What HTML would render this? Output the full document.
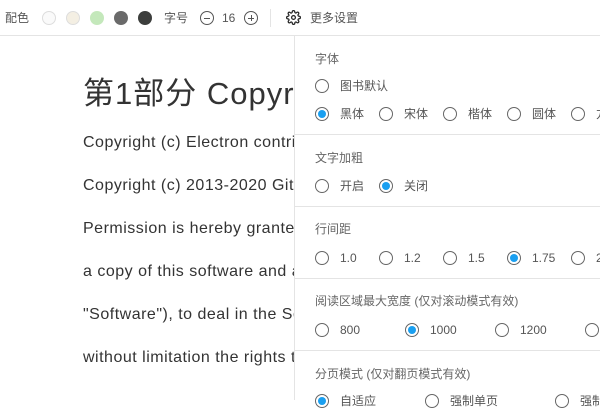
<!DOCTYPE html>
<html><head><meta charset="utf-8"><style>
*{margin:0;padding:0;box-sizing:border-box}
body{width:600px;height:400px;overflow:hidden;background:#fff;font-family:"Liberation Sans","Noto Sans CJK SC",sans-serif;position:relative;color:#555}
.bar{position:absolute;left:0;top:0;width:600px;height:36px;border-bottom:1px solid #e4e4e4;font-size:12px}
.bar span{position:absolute;top:10px;line-height:16px;color:#555}
.dot{position:absolute;top:11px;width:14px;height:14px;border-radius:50%}
.ic{position:absolute;top:11px;width:14px;height:14px;border:1px solid #555;border-radius:50%}
.content{position:absolute;left:83px;top:0;color:#333}
.content h1{position:absolute;top:68px;left:0;font-size:31px;letter-spacing:1px;font-weight:normal;white-space:nowrap;color:#333}
.content p{position:absolute;left:0;font-size:16px;letter-spacing:0.5px;white-space:nowrap;line-height:18px}
.panel{position:absolute;left:294px;top:36px;width:306px;height:364px;background:#fff;border-left:1px solid #e4e4e4;font-size:12px}
.lab{position:absolute;left:20px;color:#666}
.hr{position:absolute;left:0;width:306px;border-top:1px solid #e4e4e4}
.r{position:absolute;width:14px;height:14px;border:1px solid #666;border-radius:50%}
.r.on::after{content:"";position:absolute;left:2px;top:2px;width:8px;height:8px;border-radius:50%;background:#1a9ff0}
.t{position:absolute;color:#555;white-space:nowrap;line-height:14px}
</style></head><body>
<div class="content">
<h1>第1部分 Copyright</h1>
<p style="top:134px">Copyright (c) Electron contributors</p>
<p style="top:177px">Copyright (c) 2013-2020 GitHub Inc.</p>
<p style="top:220px">Permission is hereby granted, free of charge</p>
<p style="top:263px">a copy of this software and associated</p>
<p style="top:306px">"Software"), to deal in the Software</p>
<p style="top:349px">without limitation the rights to use</p>
</div>
<div class="bar">
<span style="left:5px">配色</span>
<div class="dot" style="left:42px;background:#fafafa;border:1px solid #ddd"></div>
<div class="dot" style="left:66px;background:#f4efe3;border:1px solid #ddd"></div>
<div class="dot" style="left:90px;background:#c4e8bb"></div>
<div class="dot" style="left:114px;background:#6a6a6a"></div>
<div class="dot" style="left:138px;background:#3c3e3c"></div>
<span style="left:164px">字号</span>
<div class="ic" style="left:200px"><div style="position:absolute;left:3px;top:5.5px;width:6px;height:1px;background:#555"></div></div>
<span style="left:222px">16</span>
<div class="ic" style="left:244px"><div style="position:absolute;left:3px;top:5.5px;width:6px;height:1px;background:#555"></div><div style="position:absolute;left:5.5px;top:3px;width:1px;height:6px;background:#555"></div></div>
<div style="position:absolute;left:270px;top:9px;height:18px;border-left:1px solid #e4e4e4"></div>
<svg style="position:absolute;left:286px;top:10px" width="15" height="15" viewBox="0 0 24 24" fill="none" stroke="#222" stroke-width="2"><circle cx="12" cy="12" r="3"/><path d="M19.4 15a1.7 1.7 0 0 0 .3 1.8l.1.1a2 2 0 1 1-2.8 2.8l-.1-.1a1.7 1.7 0 0 0-1.8-.3 1.7 1.7 0 0 0-1 1.5V21a2 2 0 1 1-4 0v-.1a1.7 1.7 0 0 0-1.1-1.5 1.7 1.7 0 0 0-1.8.3l-.1.1a2 2 0 1 1-2.8-2.8l.1-.1a1.7 1.7 0 0 0 .3-1.8 1.7 1.7 0 0 0-1.5-1H3a2 2 0 1 1 0-4h.1a1.7 1.7 0 0 0 1.5-1.1 1.7 1.7 0 0 0-.3-1.8l-.1-.1a2 2 0 1 1 2.8-2.8l.1.1a1.7 1.7 0 0 0 1.8.3H9a1.7 1.7 0 0 0 1-1.5V3a2 2 0 1 1 4 0v.1a1.7 1.7 0 0 0 1 1.5 1.7 1.7 0 0 0 1.8-.3l.1-.1a2 2 0 1 1 2.8 2.8l-.1.1a1.7 1.7 0 0 0-.3 1.8V9a1.7 1.7 0 0 0 1.5 1H21a2 2 0 1 1 0 4h-.1a1.7 1.7 0 0 0-1.5 1z"/></svg>
<span style="left:310px">更多设置</span>
</div>
<div class="panel">
<div class="lab" style="top:14px">字体</div>
<div class="r" style="left:20px;top:43px"></div><div class="t" style="left:45px;top:43px">图书默认</div>
<div class="r on" style="left:20px;top:71px"></div><div class="t" style="left:45px;top:71px">黑体</div>
<div class="r" style="left:84px;top:71px"></div><div class="t" style="left:109px;top:71px">宋体</div>
<div class="r" style="left:148px;top:71px"></div><div class="t" style="left:173px;top:71px">楷体</div>
<div class="r" style="left:212px;top:71px"></div><div class="t" style="left:237px;top:71px">圆体</div>
<div class="r" style="left:276px;top:71px"></div><div class="t" style="left:301px;top:71px">方</div>
<div class="hr" style="top:98px"></div>
<div class="lab" style="top:113px">文字加粗</div>
<div class="r" style="left:20px;top:143px"></div><div class="t" style="left:45px;top:143px">开启</div>
<div class="r on" style="left:84px;top:143px"></div><div class="t" style="left:109px;top:143px">关闭</div>
<div class="hr" style="top:170px"></div>
<div class="lab" style="top:184px">行间距</div>
<div class="r" style="left:20px;top:215px"></div><div class="t" style="left:45px;top:215px">1.0</div>
<div class="r" style="left:84px;top:215px"></div><div class="t" style="left:109px;top:215px">1.2</div>
<div class="r" style="left:148px;top:215px"></div><div class="t" style="left:173px;top:215px">1.5</div>
<div class="r on" style="left:212px;top:215px"></div><div class="t" style="left:237px;top:215px">1.75</div>
<div class="r" style="left:276px;top:215px"></div><div class="t" style="left:301px;top:215px">2</div>
<div class="hr" style="top:242px"></div>
<div class="lab" style="top:256px">阅读区域最大宽度 (仅对滚动模式有效)</div>
<div class="r" style="left:20px;top:287px"></div><div class="t" style="left:45px;top:287px">800</div>
<div class="r on" style="left:110px;top:287px"></div><div class="t" style="left:135px;top:287px">1000</div>
<div class="r" style="left:200px;top:287px"></div><div class="t" style="left:225px;top:287px">1200</div>
<div class="r" style="left:290px;top:287px"></div>
<div class="hr" style="top:314px"></div>
<div class="lab" style="top:329px">分页模式 (仅对翻页模式有效)</div>
<div class="r on" style="left:20px;top:358px"></div><div class="t" style="left:45px;top:358px">自适应</div>
<div class="r" style="left:130px;top:358px"></div><div class="t" style="left:155px;top:358px">强制单页</div>
<div class="r" style="left:260px;top:358px"></div><div class="t" style="left:285px;top:358px">强制双页</div>
</div>
</body></html>
